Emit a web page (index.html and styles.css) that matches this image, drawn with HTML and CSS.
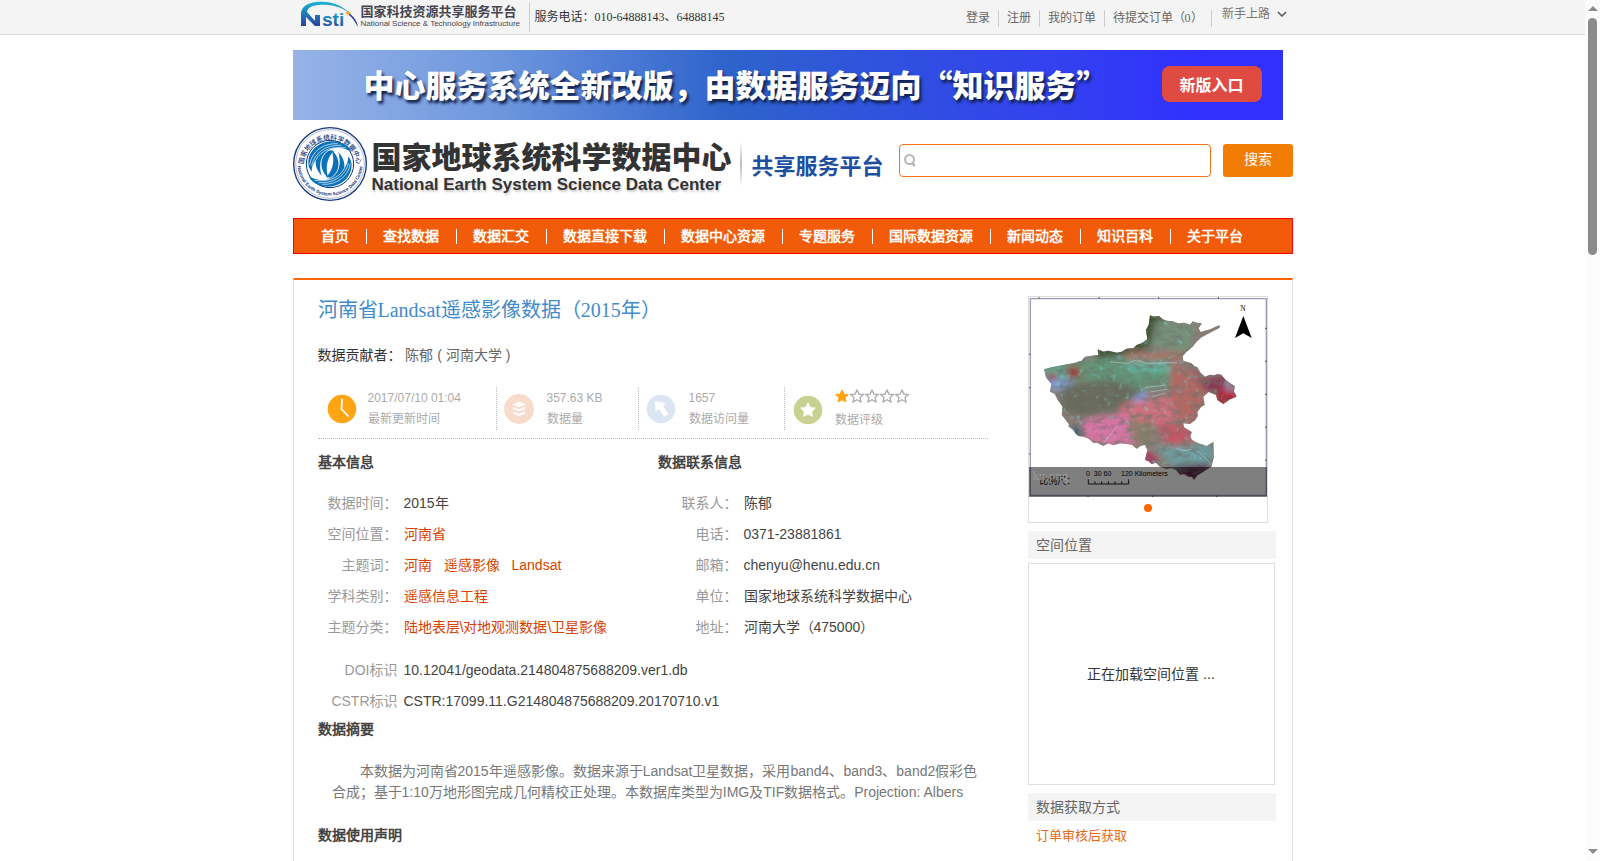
FILE: index.html
```html
<!DOCTYPE html>
<html lang="zh-CN">
<head>
<meta charset="utf-8">
<meta name="viewport" content="width=device-width, initial-scale=1">
<title>河南省Landsat遥感影像数据（2015年）</title>
<link rel="stylesheet" href="styles.css">
</head>
<body>
<div class="viewport">
<div class="page">
  <header class="topbar">
    <div class="wrap topbar-row">
      <a class="nsti" href="#" aria-label="国家科技资源共享服务平台">
        <svg class="nsti-mark" viewBox="0 0 58 26" aria-hidden="true">
          <defs>
            <linearGradient id="nsti-fill" x1="0" y1="0" x2="0" y2="1"><stop offset="0" stop-color="#1ab5d6"/><stop offset="1" stop-color="#2a3f9c"/></linearGradient>
          </defs>
          <path d="M0 24 V11 C1 4 7 1 15 0 C32 -2 43 5 48 11 C40 4 28 2 17 3 C9 4 6 7 6 10 L14 19 V13 H19 V24 H14 L5 15 V24Z" fill="url(#nsti-fill)"/>
          <path d="M48 11 C53 15 56 19 57 25 C54 20 52 16 48 13Z" fill="#2a3f9c"/>
          <text x="21" y="24" class="nsti-letters" fill="url(#nsti-fill)">sti</text>
          <path d="M47 8 L48 10 L50 11 L48 12 L47 14 L46 12 L44 11 L46 10Z" fill="#f5a623"/>
        </svg>
        <span class="nsti-words">
          <span class="nsti-cn">国家科技资源共享服务平台</span>
          <span class="nsti-en">National Science &amp; Technology Infrastructure</span>
        </span>
      </a>
      <span class="phone">服务电话：010-64888143、64888145</span>
      <nav class="user-links" aria-label="用户">
        <a href="#">登录</a>
        <a href="#">注册</a>
        <a href="#">我的订单</a>
        <a href="#">待提交订单（0）</a>
      </nav>
      <button class="guide" type="button">新手上路
        <svg viewBox="0 0 10 6" aria-hidden="true"><path d="M1 1 L5 5 L9 1" fill="none" stroke="#555" stroke-width="1.5"/></svg>
      </button>
    </div>
  </header>

  <div class="wrap">
    <div class="banner">
      <p class="banner-text">中心服务系统全新改版，由数据服务迈向“知识服务”</p>
      <a class="banner-btn" href="#">新版入口</a>
    </div>

    <div class="masthead">
      <a class="brand" href="#">
        <svg class="seal" viewBox="0 0 222 222" aria-hidden="true">
          <defs>
            <path id="arc-top" d="M31 118 A80 80 0 1 1 191 118"/>
            <path id="arc-bottom" d="M13 108 A98 98 0 0 0 209 108"/>
          </defs>
          <circle cx="111" cy="111" r="109" fill="#fff" stroke="#14357e" stroke-width="4"/>
          <circle cx="111" cy="111" r="103" fill="none" stroke="#14357e" stroke-width="1"/>
          <circle cx="111" cy="111" r="71" fill="none" stroke="#14357e" stroke-width="3"/>
          <text class="seal-cn"><textPath href="#arc-top" startOffset="50%" text-anchor="middle">国家地球系统科学数据中心</textPath></text>
          <text class="seal-en"><textPath href="#arc-bottom" startOffset="50%" text-anchor="middle">National Earth System Science Data Center</textPath></text>
          <g fill="#0a72b8">
            <path d="M46 112 C44 68 82 42 120 43 C148 44 170 58 174 74 C156 64 140 60 121 64 C88 72 74 104 86 146 C74 134 66 118 68 100 C60 110 56 120 56 134 C50 126 47 120 46 112Z"/>
            <path d="M176 112 C176 156 140 180 102 179 C74 178 52 164 48 148 C66 158 82 162 101 158 C134 150 148 118 136 76 C148 88 156 104 154 122 C162 112 166 102 166 88 C172 96 175 104 176 112Z"/>
            <path d="M110 70 C80 86 76 126 106 154 C98 126 98 98 122 72 Z"/>
            <path d="M112 152 C142 136 146 96 116 68 C124 96 124 124 100 150Z"/>
          </g>
          <g fill="none" stroke="#fff" stroke-width="2">
            <path d="M50 114 C56 72 92 48 134 50"/><path d="M56 116 C64 78 98 52 146 55"/><path d="M63 112 C74 78 104 56 158 62"/>
            <path d="M172 110 C166 150 130 174 88 172"/><path d="M166 108 C158 146 124 170 76 167"/><path d="M159 112 C148 146 118 166 64 160"/>
          </g>
        </svg>
        <span class="brand-words">
          <span class="brand-cn">国家地球系统科学数据中心</span>
          <span class="brand-en">National Earth System Science Data Center</span>
        </span>
        <span class="brand-sub">共享服务平台</span>
      </a>
      <form class="search">
        <label class="search-box">
          <svg viewBox="0 0 12 13" aria-hidden="true"><circle cx="5.5" cy="5.5" r="4.5" fill="none" stroke="#b7b7b7" stroke-width="2"/><path d="M8 9 L11 12" stroke="#b7b7b7" stroke-width="2.5"/></svg>
          <input type="text" aria-label="搜索数据">
        </label>
        <button type="submit">搜索</button>
      </form>
    </div>

    <nav class="mainnav" aria-label="主导航">
      <a href="#">首页</a><a href="#">查找数据</a><a href="#">数据汇交</a><a href="#">数据直接下载</a><a href="#">数据中心资源</a><a href="#">专题服务</a><a href="#">国际数据资源</a><a href="#">新闻动态</a><a href="#">知识百科</a><a href="#">关于平台</a>
    </nav>

    <main class="panel">
      <article class="detail">
        <h1>河南省Landsat遥感影像数据（2015年）</h1>
        <p class="contributor"><span>数据贡献者：</span> 陈郁 ( 河南大学 )</p>

        <ul class="stats">
          <li class="stat stat-time">
            <svg viewBox="0 0 30 30" aria-hidden="true"><circle cx="15" cy="15" r="14.3" fill="#ffa413"/><path d="M15 5.5 L14.5 15 L21 22" fill="none" stroke="#fff" stroke-width="1.8" stroke-linecap="round"/></svg>
            <div><span>2017/07/10 01:04</span><span>最新更新时间</span></div>
          </li>
          <li class="stat stat-size">
            <svg viewBox="0 0 30 30" aria-hidden="true"><circle cx="15" cy="15" r="15" fill="#f7dccc"/><path d="M15 7.500 L21.500 10.500 L15 13 L8.500 10.500Z" fill="#fff"/><path d="M9 14 L15 16.500 L21 14 M9 18.500 L15 21 L21 18.500" fill="none" stroke="#fff" stroke-width="2"/></svg>
            <div><span>357.63 KB</span><span>数据量</span></div>
          </li>
          <li class="stat stat-views">
            <svg viewBox="0 0 30 30" aria-hidden="true"><circle cx="15" cy="15" r="14.3" fill="#dbe6f2"/><path d="M9 7 L19.500 9.300 L17 12 L22.500 20 L18.200 23 L13 15 L9.500 17.500Z" fill="#fff"/></svg>
            <div><span>1657</span><span>数据访问量</span></div>
          </li>
          <li class="stat stat-rating">
            <svg viewBox="0 0 30 30" aria-hidden="true"><circle cx="15" cy="15" r="14.3" fill="#c8d190"/><path d="M15 7 L17.500 12 L23 12.800 L19 16.700 L20 22 L15 19.500 L10 22 L11 16.700 L7 12.800 L12.500 12Z" fill="#fff"/></svg>
            <div>
              <svg class="stars" viewBox="0 0 75 14" role="img" aria-label="1 星">
                <defs><path id="star" d="M7 1 L8.900 5.100 L13.300 5.600 L10 8.600 L11 13 L7 10.800 L3 13 L4 8.600 L0.700 5.600 L5.100 5.100Z"/></defs>
                <use href="#star" fill="#ffa413" stroke="#ffa413"/>
                <g fill="#fff" stroke="#aaa" stroke-width="1.3"><use href="#star" x="15"/><use href="#star" x="30"/><use href="#star" x="45"/><use href="#star" x="60"/></g>
              </svg>
              <span>数据评级</span>
            </div>
          </li>
        </ul>

        <div class="info">
          <section>
            <h2>基本信息</h2>
            <dl>
              <dt>数据时间：</dt><dd>2015年</dd>
              <dt>空间位置：</dt><dd><a href="#">河南省</a></dd>
              <dt>主题词：</dt><dd class="tags"><a href="#">河南</a><a href="#">遥感影像</a><a href="#">Landsat</a></dd>
              <dt>学科类别：</dt><dd><a href="#">遥感信息工程</a></dd>
              <dt>主题分类：</dt><dd><a href="#">陆地表层\对地观测数据\卫星影像</a></dd>
            </dl>
          </section>
          <section>
            <h2>数据联系信息</h2>
            <dl>
              <dt>联系人：</dt><dd>陈郁</dd>
              <dt>电话：</dt><dd>0371-23881861</dd>
              <dt>邮箱：</dt><dd>chenyu@henu.edu.cn</dd>
              <dt>单位：</dt><dd>国家地球系统科学数据中心</dd>
              <dt>地址：</dt><dd>河南大学（475000）</dd>
            </dl>
          </section>
        </div>
        <dl class="ids">
          <dt>DOI标识</dt><dd>10.12041/geodata.214804875688209.ver1.db</dd>
          <dt>CSTR标识</dt><dd>CSTR:17099.11.G214804875688209.20170710.v1</dd>
        </dl>

        <h2>数据摘要</h2>
        <p class="abstract">本数据为河南省2015年遥感影像。数据来源于Landsat卫星数据，采用band4、band3、band2假彩色合成；基于1:10万地形图完成几何精校正处理。本数据库类型为IMG及TIF数据格式。Projection: Albers</p>
        <h2>数据使用声明</h2>
      </article>

      <aside class="side">
        <figure class="thumb">
          <div class="thumb-pic">
            <svg viewBox="57 51 714 600" role="img" aria-label="河南省遥感影像图">
              <defs>
                <clipPath id="province"><path d="M420 106 L432 110 L447 108 L458 118 L470 122 L488 124 L505 130 L522 128 L540 134 L548 124 L560 128 L576 130 L566 145 L572 156 L600 148 L616 140 L630 136 L628 144 L598 160 L575 172 L560 185 L548 200 L530 215 L518 228 L520 242 L533 246 L545 250 L552 258 L562 262 L572 278 L585 290 L600 284 L612 286 L622 282 L634 284 L645 298 L660 310 L674 318 L672 335 L680 350 L660 358 L640 372 L622 360 L618 345 L596 336 L580 350 L584 375 L574 380 L562 395 L563 408 L556 420 L540 432 L520 430 L522 442 L545 456 L541 470 L546 480 L565 490 L590 498 L610 486 L612 530 L604 560 L580 575 L562 586 L552 600 L546 590 L535 590 L522 582 L510 585 L498 570 L485 565 L470 568 L450 560 L438 548 L425 552 L416 544 L405 540 L412 510 L405 495 L392 498 L380 506 L365 494 L350 492 L330 490 L310 496 L295 490 L280 497 L262 488 L250 488 L236 476 L222 470 L205 468 L196 460 L190 450 L176 440 L176 432 L155 405 L158 380 L142 358 L134 342 L120 335 L124 312 L108 292 L102 268 L125 262 L160 255 L190 250 L215 242 L225 230 L240 228 L265 225 L263 208 L280 215 L295 212 L320 218 L335 215 L350 206 L370 205 L380 195 L395 190 L412 178 L408 150 L416 135Z"/></clipPath>
                <filter id="soften" x="-20%" y="-20%" width="140%" height="140%"><feGaussianBlur stdDeviation="9"/></filter>
                <filter id="grain" x="0" y="0" width="100%" height="100%"><feTurbulence type="fractalNoise" baseFrequency="0.035 0.06" numOctaves="4" seed="8"/><feColorMatrix values="0 0 0 0 0.15  0 0 0 0 0.18  0 0 0 0 0.15  2.6 0 0 0 -1.15"/></filter>
                <filter id="speck" x="0" y="0" width="100%" height="100%"><feTurbulence type="fractalNoise" baseFrequency="0.05" numOctaves="3" seed="21"/><feColorMatrix values="0 0 0 0 0.2  0 0 0 0 0.6  0 0 0 0 0.62  0 4 0 0 -2.5"/></filter>
              </defs>
              <path d="M57 51H771V651H57Z" fill="#fff"/>
              <path d="M61 56H769V646H61Z" fill="none" stroke="#9d9bb4" stroke-width="4"/>
              <path d="M87 51v5M267 51v5M446 51v5M625 51v5M57 223h4M57 323h4M57 522h4M765 145h6M765 244h6M765 343h6M765 442h6M765 541h6M234 646v5M427 646v5M619 646v5" stroke="#555" stroke-width="3"/>
              <g clip-path="url(#province)">
                <path d="M90 90H700V620H90Z" fill="#8d7c76"/>
                <g filter="url(#soften)">
                  <path d="M400 90H470V180L400 210L260 240V200Z" fill="#3f5133"/>
                  <path d="M440 120L560 130L540 220L420 200Z" fill="#77907a"/>
                  <path d="M100 250L280 235L420 225L480 255V320L350 330L230 300L110 320Z" fill="#649477"/>
                  <path d="M350 215H520V245H350Z" fill="#a57769"/>
                  <path d="M100 265H170V290H100ZM350 245H480V275H350Z" fill="#61b3a0"/>
                  <path d="M115 300H190V330H115ZM330 335H410V365H330Z" fill="#86a0df"/>
                  <path d="M170 262H210V292H170ZM110 280H140V300H110Z" fill="#a32c34"/>
                  <path d="M160 315L310 300L400 330L330 390L210 410L150 390Z" fill="#696b5b"/>
                  <path d="M480 250L590 300L575 400L540 430L480 410Z" fill="#b26963"/>
                  <path d="M340 370L480 350L500 410L460 440L380 420L320 410Z" fill="#d1707d"/>
                  <path d="M215 420L350 400L380 490L280 500L220 470Z" fill="#d973a4"/>
                  <path d="M350 420L430 430L420 490L370 480Z" fill="#8b806b"/>
                  <path d="M440 430L540 440L545 495L470 500Z" fill="#c45765"/>
                  <path d="M430 500L610 490V555L500 570Z" fill="#6d9c9f"/>
                  <path d="M405 510L440 530L440 560L400 550Z" fill="#b32f5b"/>
                  <path d="M480 560L605 550L560 605Z" fill="#5d1640"/>
                  <path d="M530 245L580 300L650 285L650 330L590 335Z" fill="#88344f"/>
                  <path d="M620 330H690V375H620Z" fill="#b5182c"/>
                  <path d="M645 305H680V335H645Z" fill="#a17fa0"/>
                  <path d="M190 440H215V475H190Z" fill="#1f5877"/>
                </g>
                <path d="M90 90H700V620H90Z" filter="url(#grain)" opacity=".7"/>
                <path d="M90 90H700V620H90Z" filter="url(#speck)" opacity=".5"/>
                <path d="M405 322L465 316M420 336L470 328M425 350L465 340M500 505L520 512L545 508M560 510L600 548M300 245L350 250L380 240L410 250L500 248M280 490L300 465L320 440" fill="none" stroke="#b9d7e0" stroke-width="2" opacity=".8"/>
              </g>
              <text x="691" y="94" class="map-north">N</text>
              <path d="M700 108L725 174L700 160L675 174Z" fill="#000"/>
              <text x="88" y="612" class="map-scale-cn">比例尺：</text>
              <text x="228" y="588" class="map-scale">0&#160;&#160;30 60&#160;&#160;&#160;&#160;&#160;120 Kilometers</text>
              <path d="M235 598V612H356V598M255 604V612M275 604V612M295 604V612M315 604V612M335 604V612" fill="none" stroke="#222" stroke-width="3"/>
            </svg>
            <figcaption>ku.png</figcaption>
          </div>
          <button class="dot" type="button" aria-label="第 1 张"></button>
        </figure>
        <h3>空间位置</h3>
        <div class="mapbox">正在加载空间位置 ...</div>
        <h3>数据获取方式</h3>
        <p class="access">订单审核后获取</p>
      </aside>
    </main>
  </div>
</div>
<div class="scrollbar" aria-hidden="true">
  <i class="arrow-up"></i>
  <i class="thumb-bar"></i>
  <i class="arrow-down"></i>
</div>
</div>
</body>
</html>
```
FILE: styles.css
```css
* { box-sizing: border-box; }
body, h1, h2, h3, p, ul, dl, dd, figure { margin: 0; padding: 0; }
body {
  font-family: "Liberation Sans", Arial, sans-serif;
  font-size: 14px;
  line-height: 20px;
  color: #333;
  background: #fff;
}
a { color: inherit; text-decoration: none; }
button, input { font: inherit; border: 0; background: none; padding: 0; }
svg { display: block; }

.viewport { display: flex; height: 100vh; overflow: hidden; }
.page { flex: 1; min-width: 0; overflow: hidden; }
.wrap { max-width: 1000px; margin: 0 auto; }

.topbar {
  background: #f4f4f4;
  border-bottom: 1px solid #d9d9d9;
  font-family: "Liberation Serif", "Times New Roman", serif;
  font-size: 12px;
}
.topbar-row { display: flex; align-items: flex-start; height: 34px; padding: 2px 6px 0 8px; }
.nsti { display: flex; gap: 2px; height: 30px; padding-right: 8px; border-right: 1px solid #ccc; }
.nsti-mark { width: 58px; height: 26px; overflow: visible; }
.nsti-letters { font: bold 19px "Liberation Sans", sans-serif; }
.nsti-words { display: flex; flex-direction: column; padding-top: 2px; color: #454550; white-space: nowrap; width: 160px; }
.nsti-cn { font: bold 13px/14px "Noto Sans CJK SC", sans-serif; }
.nsti-en { font: 8px/12px "Liberation Sans", sans-serif; }
.phone { padding: 5px 0 0 5px; font-family: "Liberation Serif", "Noto Sans CJK JP", serif; }
.user-links { display: flex; margin-left: auto; padding-top: 8px; color: #666; }
.user-links a { line-height: 17px; padding: 0 8px; border-right: 1px solid #ccc; }
.guide { display: flex; align-items: center; gap: 7px; padding: 2px 0 0 10px; color: #777; }
.guide svg { width: 10px; height: 6px; }

.banner {
  display: flex;
  align-items: center;
  justify-content: space-between;
  height: 70px;
  margin: 15px 10px 0 0;
  padding: 0 21px 2px 71px;
  color: #fff;
  font-family: "Noto Sans CJK SC", sans-serif;
  font-weight: bold;
  background: linear-gradient(90deg, #97b3e8, #6f98de 20%, #4f7dd6 32%, #2e63cb 44%, #304fe0 62%, #3340f0 78%, #3030ff 92%);
}
.banner-text { font-size: 31px; line-height: 44px; font-weight: 900; text-shadow: 2px 3px 3px #10204a; white-space: nowrap; }
.banner-btn { width: 100px; line-height: 36px; border-radius: 8px; background: #df4a43; font-size: 16px; text-align: center; }

.masthead { display: flex; justify-content: space-between; align-items: flex-start; padding: 7px 0 17px; }
.brand { display: flex; align-items: center; }
.seal { width: 74px; height: 74px; overflow: visible; }
.seal-cn { font: 500 20px "Noto Sans CJK SC", sans-serif; fill: #14357e; }
.seal-en { font: bold 14px "Liberation Sans", sans-serif; fill: #14357e; }
.brand-words { display: flex; flex-direction: column; padding: 8px 0 0 5px; color: #333; white-space: nowrap; }
.brand-cn { font: 900 30px/34px "Noto Sans CJK SC", sans-serif; }
.brand-en { font: bold 17px/26px "Liberation Sans", sans-serif; text-shadow: 1px 2px 2px #ccc; }
.brand-sub {
  margin-left: 8px;
  padding-left: 10px;
  border-left: 2px solid;
  border-image: linear-gradient(#fff, #bbb, #fff) 1;
  font: bold 22px/44px "Noto Sans CJK SC", sans-serif;
  color: #1e4fa3;
  white-space: nowrap;
}
.search { display: flex; gap: 12px; padding-top: 17px; }
.search-box { display: flex; align-items: center; gap: 6px; width: 312px; height: 33px; padding: 0 4px; border: 1px solid #f77417; border-radius: 4px; background: #fff; }
.search-box svg { width: 12px; height: 13px; }
.search-box input { flex: 1; outline: 0; }
.search button { width: 70px; height: 33px; padding-bottom: 4px; border-radius: 3px; background: #f37d04; color: #fff; }

.mainnav { display: flex; align-items: center; height: 36px; padding-left: 11px; border: 1px solid #f00; background: #f25b0a; color: #fff; font-weight: bold; }
.mainnav a { padding: 0 17px 0 16px; line-height: 15px; border-right: 1px solid #fff; white-space: nowrap; }
.mainnav a:last-child { border: 0; }

.panel { display: flex; justify-content: space-between; margin-top: 24px; padding: 16px 16px 80px 24px; border: 1px solid #ddd; border-top: 2px solid #f60; }
.detail { width: 670px; }
h1 { font: 20px/28px "Liberation Serif", "Times New Roman", serif; color: #428bca; }
h2 { font-size: 14px; line-height: 20px; color: #444; }
.contributor { padding-top: 21px; color: #666; }
.contributor span { color: #333; font-family: "Liberation Sans", "Noto Sans CJK JP", sans-serif; }

.stats { display: flex; list-style: none; margin-top: 22px; padding-bottom: 8px; border-bottom: 1px dotted #bbb; font-size: 12px; color: #aaa; }
.stat { display: flex; align-items: center; gap: 13px; height: 43px; border-right: 1px dotted #bbb; }
.stat > svg { width: 30px; height: 30px; }
.stat span { display: block; line-height: 21px; white-space: nowrap; }
.stat-time { width: 179px; padding-left: 9px; gap: 11px; }
.stat-size { width: 142px; padding-left: 7px; }
.stat-views { width: 146px; padding-left: 7px; }
.stat-rating { padding: 2px 0 0 8px; border: 0; gap: 12px; }
.stat .stars { width: 75px; height: 14px; margin-bottom: 7px; }

.info { display: flex; padding-top: 13px; }
.info section { flex: 0 0 340px; }
.info dl { padding-top: 16px; }
dl { display: grid; grid-template-columns: 80px 1fr; column-gap: 6px; line-height: 31px; white-space: nowrap; }
dt { text-align: right; color: #999; font-family: "Liberation Sans", "Noto Sans CJK JP", sans-serif; }
dd { color: #444; }
dd a { color: #d84100; }
.tags { display: flex; gap: 12px; }
.ids { padding: 12px 0 2px; }
.abstract { padding: 22px 9px 22px 14px; line-height: 21px; text-indent: 28px; color: #777; }

.side { width: 248px; }
.thumb { width: 240px; height: 227px; border: 1px solid #ddd; }
.thumb-pic { position: relative; }
.thumb-pic svg { width: 100%; height: 200px; }
figcaption { position: absolute; left: 0; right: 0; bottom: 0; height: 30px; padding: 0 4px; line-height: 18px; background: rgba(0, 0, 0, .5); color: #999; font-family: "Liberation Serif", serif; font-size: 13px; }
.map-north { font: 22px "Liberation Serif", serif; }
.map-scale-cn { font: 27px "Noto Sans CJK JP", sans-serif; }
.map-scale { font: 21px "Liberation Sans", sans-serif; }
.dot { display: block; width: 8px; height: 8px; margin: 7px auto 0; border-radius: 50%; background: #f60; }
h3 { margin-top: 8px; padding: 0 8px; font-size: 14px; line-height: 28px; font-weight: normal; color: #666; background: #f4f4f4; }
.mapbox { display: flex; align-items: center; justify-content: center; height: 222px; margin: 4px 1px 0 0; border: 1px solid #ddd; }
.access { padding: 5px 8px; font-size: 13px; color: #e56a17; }

.scrollbar { display: flex; flex-direction: column; align-items: center; width: 15px; padding: 6px 0 7px; background: #fcfcfc; }
.arrow-up { border: 5px solid transparent; border-top: 0; border-bottom-color: #8b8b8b; }
.arrow-down { margin-top: auto; border: 5px solid transparent; border-bottom: 0; border-top-color: #8b8b8b; }
.thumb-bar { width: 9px; height: 28%; margin-top: 7px; border-radius: 5px; background: #8b8b8b; }
```
